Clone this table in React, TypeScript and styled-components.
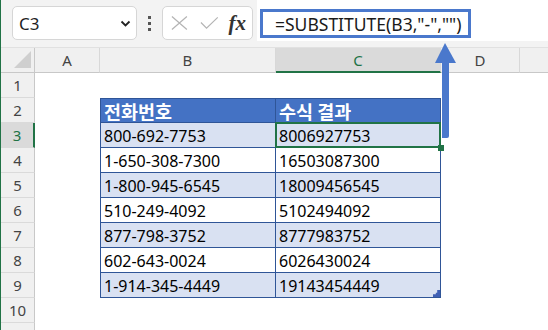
import styled, { createGlobalStyle, css } from "styled-components";

const GlobalStyle = createGlobalStyle`
  html, body {
    margin: 0;
    padding: 0;
    background: #ffffff;
    overflow: hidden;
  }
  body {
    font-family: "Noto Sans", "Noto Sans CJK KR", sans-serif;
  }
`;

// last column runs off the right edge, its letter is never visible
const COLS = ["A", "B", "C", "D", ""];
const ROWS = [1, 2, 3, 4, 5, 6, 7, 8, 9, 10, 11];

const phones = [
  "800-692-7753",
  "1-650-308-7300",
  "1-800-945-6545",
  "510-249-4092",
  "877-798-3752",
  "602-643-0024",
  "1-914-345-4449",
];

function App() {
  return (
    <>
      <GlobalStyle />
      <Frame>
        <Toolbar>
          <NameBox>
            <span>C3</span>
            <svg width="11" height="7" viewBox="0 0 11 7">
              <path d="M1.5 1.5 L5.5 5.5 L9.5 1.5" stroke="#222" strokeWidth="1.8" fill="none" />
            </svg>
          </NameBox>
          <Grip>
            <i />
            <i />
            <i />
          </Grip>
          <FnBox>
            <svg width="18" height="16" viewBox="0 0 18 16">
              <path d="M1 1 L17 15 M17 1 L1 15" stroke="#b4b4b4" strokeWidth="1.3" fill="none" />
            </svg>
            <svg width="20" height="14" viewBox="0 0 20 14">
              <path d="M1 6.5 L7 12.5 L19 1" stroke="#b4b4b4" strokeWidth="1.3" fill="none" />
            </svg>
            <Fx>fx</Fx>
          </FnBox>
          <FormulaBar>
            <FormulaInput>=SUBSTITUTE(B3,"-","")</FormulaInput>
          </FormulaBar>
        </Toolbar>

        <Sheet>
          <Corner>
            <svg width="17" height="17" viewBox="0 0 17 17">
              <polygon points="17,0 17,17 0,17" fill="#cfcfcf" />
            </svg>
          </Corner>
          {COLS.map((c, n) => (
            <ColHead key={n} $active={c === "C"}>
              {c}
            </ColHead>
          ))}

          {ROWS.map((r) => {
            const i = r - 3;
            const inBody = i >= 0 && i < phones.length;
            const isHead = r === 2;
            const band = inBody && i % 2 === 0;
            const digits = inBody ? phones[i].replace(/-/g, "") : "";
            return [
              <RowHead key={`h${r}`} $active={r === 3}>
                {r <= 10 ? r : ""}
              </RowHead>,
              <Cell key={`a${r}`} />,
              isHead ? (
                <HeadCell key={`b${r}`} $first>
                  전화번호
                </HeadCell>
              ) : inBody ? (
                <TableCell key={`b${r}`} $band={band} $first>
                  {phones[i]}
                </TableCell>
              ) : (
                <Cell key={`b${r}`} />
              ),
              isHead ? (
                <HeadCell key={`c${r}`}>수식 결과</HeadCell>
              ) : inBody ? (
                <TableCell
                  key={`c${r}`}
                  $band={band}
                  $selected={r === 3}
                  $last={r === 9}
                >
                  {digits}
                </TableCell>
              ) : (
                <Cell key={`c${r}`} />
              ),
              <Cell key={`d${r}`} />,
              <Cell key={`e${r}`} />,
            ];
          })}
        </Sheet>

        <Arrow width="24" height="100" viewBox="0 0 24 100">
          <polygon points="1,23 11,3 22,23" fill="#4a78cc" />
          <path d="M8 22 L15 22 L15 96 Q15 98 13 98 L8 98 Z" fill="#4a78cc" />
        </Arrow>
      </Frame>
    </>
  );
}

export default App;

const Frame = styled.div`
  position: relative;
  width: 548px;
  height: 330px;
  overflow: hidden;
  border-left: 1px solid #217346;
  box-sizing: border-box;
  background: #ffffff;
`;

const Toolbar = styled.div`
  display: flex;
  align-items: center;
  height: 48px;
  padding-left: 11px;
  background: #f3f3f3;
  border-bottom: 1px solid #e1e1e1;
  box-sizing: border-box;
`;

const NameBox = styled.div`
  display: flex;
  align-items: center;
  justify-content: space-between;
  flex: none;
  width: 125px;
  height: 34px;
  margin-top: -1px;
  padding: 0 5px 0 6px;
  box-sizing: border-box;
  background: #ffffff;
  border: 1px solid #d6d6d6;
  border-radius: 5px;
  font-size: 17px;
  color: #1f1f1f;
`;

const Grip = styled.div`
  display: flex;
  flex-direction: column;
  gap: 3px;
  margin: 0 11px;
  i {
    display: block;
    width: 3px;
    height: 3px;
    background: #555;
  }
`;

const FnBox = styled.div`
  display: flex;
  align-items: center;
  flex: none;
  gap: 12px;
  width: 91px;
  height: 34px;
  margin-top: -1px;
  padding: 0 6px 0 8px;
  box-sizing: border-box;
  background: #ffffff;
  border: 1px solid #d6d6d6;
  border-radius: 5px;
`;

const Fx = styled.span`
  font-family: "Liberation Serif", "DejaVu Serif", serif;
  font-style: italic;
  font-weight: bold;
  font-size: 21px;
  color: #333;
  margin-left: -2px;
`;

const FormulaBar = styled.div`
  flex: 1;
  align-self: stretch;
  display: flex;
  align-items: center;
  margin-left: 4px;
  padding-left: 3px;
  margin-bottom: 6px;
  background: #ffffff;
`;

const FormulaInput = styled.div`
  width: 211px;
  height: 29px;
  margin-top: 6px;
  box-sizing: border-box;
  border: 3px solid #4a78cc;
  padding-left: 12px;
  display: flex;
  align-items: center;
  font-size: 17.5px;
  color: #1a1a1a;
  white-space: nowrap;
`;

const Sheet = styled.div`
  display: grid;
  grid-template-columns: 34px 65px 176px 165px 79px 79px;
  grid-auto-rows: 25px;
`;

const headBase = css`
  background: #f0f0f0;
  color: #444;
  font-size: 15px;
  display: flex;
  align-items: center;
  justify-content: center;
  box-sizing: border-box;
`;

const Corner = styled.div`
  ${headBase};
  align-items: flex-end;
  justify-content: flex-end;
  padding: 0 3px 4px 0;
  border-right: 1px solid #c8c8c8;
  border-bottom: 1px solid #c8c8c8;
`;

const ColHead = styled.div<{ $active?: boolean }>`
  ${headBase};
  border-right: 1px solid #d8d8d8;
  border-bottom: 1px solid #c8c8c8;
  ${({ $active }) =>
    $active &&
    css`
      background: #dadada;
      color: #217346;
      border-bottom: 2px solid #217346;
    `}
`;

const RowHead = styled.div<{ $active?: boolean }>`
  ${headBase};
  border-right: 1px solid #c8c8c8;
  border-bottom: 1px solid #dadada;
  ${({ $active }) =>
    $active &&
    css`
      background: #dadada;
      color: #217346;
      border-right: 2px solid #217346;
    `}
`;

const Cell = styled.div`
  background: #ffffff;
`;

const tableLine = "1px solid #2f5597";

const HeadCell = styled.div<{ $first?: boolean }>`
  display: flex;
  align-items: center;
  padding-left: 3px;
  box-sizing: border-box;
  background: #4472c4;
  color: #ffffff;
  font-family: "Noto Sans CJK KR", sans-serif;
  font-weight: bold;
  font-size: 18.5px;
  border-top: ${tableLine};
  border-right: ${tableLine};
  border-bottom: ${tableLine};
  ${({ $first }) => $first && `border-left: ${tableLine};`}
`;

const TableCell = styled.div<{
  $band?: boolean;
  $first?: boolean;
  $selected?: boolean;
  $last?: boolean;
}>`
  position: relative;
  display: flex;
  align-items: center;
  padding: 1px 0 0 3px;
  box-sizing: border-box;
  background: ${({ $band }) => ($band ? "#d9e1f2" : "#ffffff")};
  color: #000;
  font-size: 16px;
  border-right: ${tableLine};
  border-bottom: ${tableLine};
  ${({ $first }) => $first && `border-left: ${tableLine};`}
  ${({ $selected }) =>
    $selected &&
    css`
      &::after {
        content: "";
        position: absolute;
        inset: -1px -1px -1px -1px;
        border: 2px solid #217346;
      }
      &::before {
        content: "";
        position: absolute;
        right: -4px;
        bottom: -4px;
        width: 6px;
        height: 6px;
        background: #217346;
        z-index: 1;
      }
    `}
  ${({ $last }) =>
    $last &&
    css`
      &::after {
        content: "";
        position: absolute;
        right: 0;
        bottom: 0;
        width: 7px;
        height: 7px;
        background: #3f5fb4;
        clip-path: polygon(100% 0, 100% 100%, 0 100%, 0 60%, 40% 60%, 40% 40%, 60% 40%, 60% 0);
      }
    `}
`;

const Arrow = styled.svg`
  position: absolute;
  left: 433px;
  top: 40px;
  pointer-events: none;
`;
